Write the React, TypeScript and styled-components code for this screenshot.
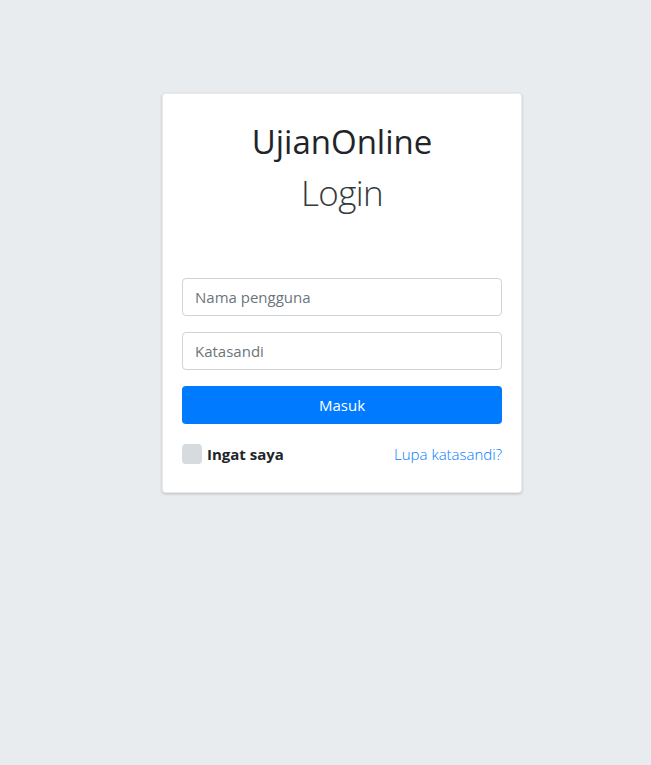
import React from "react";
import styled, { createGlobalStyle } from "styled-components";

const Global = createGlobalStyle`
  html, body { margin: 0; padding: 0; }
  body {
    background: #e9ecef;
    font-family: "Open Sans", "Noto Sans", sans-serif;
    color: #212529;
    min-height: 765px;
  }
`;

const Page = styled.div`
  display: flex;
  justify-content: center;
  padding-top: 93px;
  padding-left: 33px;
`;

const Card = styled.div`
  width: 360px;
  box-sizing: border-box;
  background: #fff;
  border: 1px solid rgba(0, 0, 0, 0.08);
  border-radius: 4px;
  box-shadow: 0 1px 3px rgba(0, 0, 0, 0.2);
  padding: 20px 19px 28px;
`;

const Brand = styled.h2`
  margin: 8px 0 0;
  text-align: center;
  font-size: 33px;
  font-weight: 400;
  line-height: 1.2;
  letter-spacing: 0;
`;

const Title = styled.h1`
  margin: 10px 0 64px;
  text-align: center;
  font-size: 35px;
  font-weight: 300;
  line-height: 1.2;
  letter-spacing: -0.6px;
  color: #343a40;
`;

const Form = styled.form`
  display: flex;
  flex-direction: column;
  gap: 16px;
`;

const Input = styled.input`
  height: 38px;
  box-sizing: border-box;
  border: 1px solid #ced4da;
  border-radius: 4px;
  padding: 6px 12px;
  font-family: inherit;
  font-size: 15px;
  color: #495057;
  &::placeholder { color: #6c757d; }
`;

const Button = styled.button`
  height: 38px;
  border: none;
  border-radius: 4px;
  background: #007bff;
  color: #fff;
  font-family: inherit;
  font-size: 15px;
`;

const Row = styled.div`
  display: flex;
  align-items: center;
  justify-content: space-between;
  margin-top: 4px;
`;

const Check = styled.label`
  display: flex;
  align-items: center;
  gap: 5px;
  font-weight: 700;
  font-size: 15px;
  color: #212529;
`;

const Box = styled.span`
  width: 20px;
  height: 20px;
  border-radius: 4px;
  background: #d6dbdf;
`;

const Link = styled.a`
  color: #007bff;
  font-weight: 300;
  font-size: 15px;
  text-decoration: none;
`;

export default function App() {
  return (
    <>
      <Global />
      <Page>
        <Card>
          <Brand>UjianOnline</Brand>
          <Title>Login</Title>
          <Form onSubmit={(e) => e.preventDefault()}>
            <Input placeholder="Nama pengguna" />
            <Input type="password" placeholder="Katasandi" />
            <Button type="submit">Masuk</Button>
            <Row>
              <Check>
                <Box />
                Ingat saya
              </Check>
              <Link href="#">Lupa katasandi?</Link>
            </Row>
          </Form>
        </Card>
      </Page>
    </>
  );
}
